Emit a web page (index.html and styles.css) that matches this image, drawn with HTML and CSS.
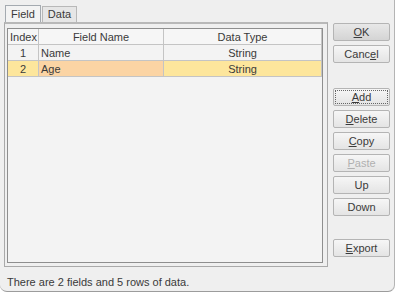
FILE: index.html
```html
<!DOCTYPE html>
<html>

<head>
    <link rel="stylesheet" href="styles.css">
</head>

<body>
    <div class="dialog">
        <div class="main">
            <div class="left">
                <div class="tabs">
                    <span class="tab active">Field</span>
                    <span class="tab">Data</span>
                </div>
                <div class="panel">
                    <div class="grid">
                        <table>
                            <tr>
                                <th class="col-index">Index</th>
                                <th class="col-name">Field Name</th>
                                <th class="col-type">Data Type</th>
                            </tr>
                            <tr>
                                <td class="num">1</td>
                                <td>Name</td>
                                <td class="center">String</td>
                            </tr>
                            <tr class="selected">
                                <td class="num">2</td>
                                <td class="focus">Age</td>
                                <td class="center">String</td>
                            </tr>
                        </table>
                    </div>
                </div>
            </div>

            <div class="buttons">
                <button class="ok"><u>O</u>K</button>
                <button>Canc<u>e</u>l</button>
                <div class="spacer"></div>
                <button class="default"><u>A</u>dd</button>
                <button><u>D</u>elete</button>
                <button><u>C</u>opy</button>
                <button disabled><u>P</u>aste</button>
                <button>Up</button>
                <button>Down</button>
                <div class="spacer small"></div>
                <button><u>E</u>xport</button>
            </div>
        </div>

        <div class="status">There are 2 fields and 5 rows of data.</div>
    </div>
</body>

</html>
```

FILE: styles.css
```css
body {
    margin: 0;
    background: #ffffff;
    font-family: 'Liberation Sans', Arial, sans-serif;
    font-size: 11px;
    color: #3a3a3a;
}

.dialog {
    width: 395px;
    height: 292px;
    box-sizing: border-box;
    background: #efefef;
    border-right: 1px solid #b4b4b4;
    border-bottom: 1px solid #9c9c9c;
    border-radius: 0 0 7px 7px;
    padding: 5px 0 0 4px;
}

.main {
    display: flex;
}

.left {
    width: 324px;
}

.tabs {
    display: flex;
    align-items: flex-end;
    height: 17px;
    padding-left: 1px;
}

.tab {
    height: 15px;
    line-height: 15px;
    padding: 0 5px;
    border: 1px solid #b8b8b8;
    border-bottom: none;
    background: #e6e6e6;
    margin-right: 1px;
}

.tab.active {
    height: 16px;
    line-height: 16px;
    background: #f3f3f3;
    border-color: #a4aab0;
}

.panel {
    height: 245px;
    box-sizing: border-box;
    border: 1px solid #a9a9a9;
    border-top: 2px solid #b8b8b8;
    padding: 4px 4px 3px 2px;
}

.grid {
    height: 100%;
    box-sizing: border-box;
    border: 1px solid #8e8e8e;
    background: #f3f3f3;
}

table {
    width: 100%;
    border-collapse: collapse;
    table-layout: fixed;
}

th,
td {
    height: 15px;
    padding: 0 2px;
    border-right: 1px solid #c4c4c4;
    border-bottom: 1px solid #c4c4c4;
    font-weight: normal;
    white-space: nowrap;
}

th {
    text-align: center;
    background: #f6f6f6;
}

.col-index {
    width: 26px;
}

.col-name {
    width: 120px;
}

.num {
    text-align: center;
}

.center {
    text-align: center;
}

.selected td {
    background: #fde69c;
}

.selected td.focus {
    background: #fbd4a4;
}

.buttons {
    display: flex;
    flex-direction: column;
    margin-left: 5px;
    padding-top: 18px;
    width: 57px;
}

button {
    height: 18px;
    margin-bottom: 4px;
    padding: 0;
    border: 1px solid #b4b4b4;
    border-radius: 2px;
    background: linear-gradient(#f6f6f6, #e4e4e4);
    font-family: 'Liberation Sans', Arial, sans-serif;
    font-size: 11px;
    color: #3a3a3a;
}

button.ok {
    background: linear-gradient(#e8e8e8, #d4d4d4);
}

button.default {
    outline: 1px dotted #666;
    outline-offset: -3px;
}

button:disabled {
    color: #b0b0b0;
}

.spacer {
    height: 21px;
}

.spacer.small {
    height: 19px;
}

.status {
    margin-top: 9px;
    padding-left: 3px;
}
```
